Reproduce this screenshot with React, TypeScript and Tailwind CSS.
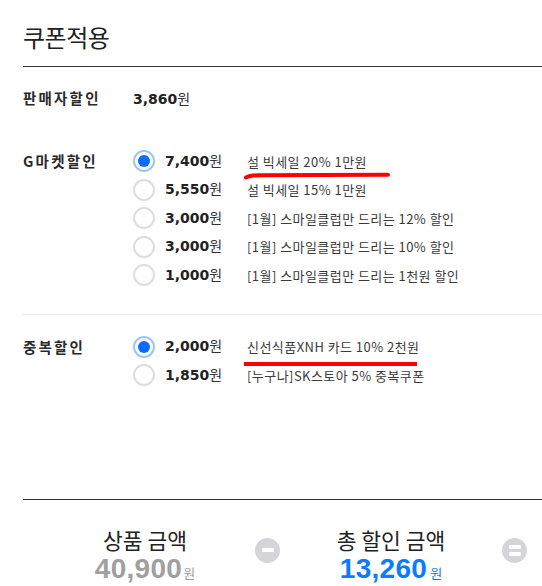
import React from "react";

function Radio({ sel }: { sel?: boolean }) {
  if (sel) {
    return (
      <div className="w-[22px] h-[22px] rounded-full border-2 border-[#9cc4ff] flex items-center justify-center shrink-0 bg-white">
        <div className="w-[12px] h-[12px] rounded-full bg-[#0b6cff]" />
      </div>
    );
  }
  return <div className="w-[22px] h-[22px] rounded-full border-2 border-[#dedede] bg-white shrink-0" />;
}

function OptRow({ sel, amt, desc }: { sel?: boolean; amt: string; desc: string }) {
  return (
    <div className="flex items-center h-[28.5px]">
      <Radio sel={sel} />
      <div className="w-[92px] pl-[10px] flex items-baseline shrink-0">
        <span className="font-['DejaVu_Sans',sans-serif] font-bold text-[14px] text-[#222]">{amt}</span>
        <span className="font-['Noto_Sans_CJK_KR',sans-serif] text-[14px] text-[#333] leading-none">원</span>
      </div>
      <span className="font-['Noto_Sans_CJK_KR',sans-serif] text-[13px] tracking-[0.45px] text-[#3a3a3a] whitespace-nowrap">{desc}</span>
    </div>
  );
}

function Label({ children }: { children: React.ReactNode }) {
  return (
    <div className="w-[110px] h-[28.5px] flex items-center shrink-0 font-['Noto_Sans_CJK_KR',sans-serif] font-semibold text-[14.5px] tracking-[2.2px] text-[#2a2a2a]">
      {children}
    </div>
  );
}

function CircleIcon({ kind }: { kind: "minus" | "equals" }) {
  return (
    <div className="w-[25px] h-[25px] rounded-full bg-[#d4d4d9] flex flex-col items-center justify-center gap-[3px] shrink-0 mt-[13px]">
      <div className="w-[12px] h-[4px] bg-white rounded-[1px]" />
      {kind === "equals" && <div className="w-[12px] h-[4px] bg-white rounded-[1px]" />}
    </div>
  );
}

export default function App() {
  return (
    <div className="relative w-[542px] h-[586px] bg-white overflow-hidden font-['Noto_Sans_CJK_KR',sans-serif]">
      {/* header */}
      <div className="h-[67px] ml-[23px] border-b border-[#333] pt-[21px]">
        <h1 className="text-[24px] leading-[32px] tracking-[-0.5px] text-[#222] font-normal">쿠폰적용</h1>
      </div>

      {/* seller discount */}
      <div className="flex pl-[23px] mt-[17px]">
        <Label>판매자할인</Label>
        <div className="flex items-baseline h-[28.5px] pt-[4px]">
          <span className="font-['DejaVu_Sans',sans-serif] font-bold text-[14px] text-[#222]">3,860</span>
          <span className="text-[14px] text-[#333]">원</span>
        </div>
      </div>

      {/* G market discount */}
      <div className="flex pl-[23px] mt-[34.5px]">
        <Label>G마켓할인</Label>
        <div className="flex flex-col">
          <OptRow sel amt="7,400" desc="설 빅세일 20% 1만원" />
          <OptRow amt="5,550" desc="설 빅세일 15% 1만원" />
          <OptRow amt="3,000" desc="[1월] 스마일클럽만 드리는 12% 할인" />
          <OptRow amt="3,000" desc="[1월] 스마일클럽만 드리는 10% 할인" />
          <OptRow amt="1,000" desc="[1월] 스마일클럽만 드리는 1천원 할인" />
        </div>
      </div>

      <div className="ml-[22px] mt-[24px] h-px bg-[#ebebeb]" />

      {/* duplicate discount */}
      <div className="flex pl-[23px] mt-[18px]">
        <Label>중복할인</Label>
        <div className="flex flex-col">
          <OptRow sel amt="2,000" desc="신선식품XNH 카드 10% 2천원" />
          <OptRow amt="1,850" desc="[누구나]SK스토아 5% 중복쿠폰" />
        </div>
      </div>

      <div className="ml-[23px] mt-[109px] h-px bg-[#333]" />

      {/* summary */}
      <div className="flex pl-[40px] pt-[25px]">
        <div className="w-[210px] flex flex-col items-center">
          <div className="text-[21.5px] leading-[29px] text-[#222]">상품 금액</div>
          <div className="flex items-baseline leading-[30px]">
            <span className="font-['Liberation_Sans',sans-serif] font-bold text-[28px] tracking-[0.3px] text-[#a0a0a0]">40,900</span>
            <span className="text-[13px] text-[#a0a0a0] ml-[1px]">원</span>
          </div>
        </div>
        <div className="w-[5px]" />
        <CircleIcon kind="minus" />
        <div className="w-[222px] flex flex-col items-center">
          <div className="text-[21.5px] leading-[29px] text-[#222]">총 할인 금액</div>
          <div className="flex items-baseline leading-[30px]">
            <span className="font-['Liberation_Sans',sans-serif] font-bold text-[28px] tracking-[0.3px] text-[#0b7bff]">13,260</span>
            <span className="text-[13px] text-[#0b7bff] ml-[3px]">원</span>
          </div>
        </div>
        <CircleIcon kind="equals" />
      </div>

      {/* red hand-drawn underlines (annotation overlay) */}
      <svg className="absolute inset-0 pointer-events-none" width="542" height="586" viewBox="0 0 542 586">
        <path d="M246 177.5 C249 176 252 175.5 258 175.2 L388 174.8" stroke="#ff0000" strokeWidth="4" fill="none" strokeLinecap="round" />
        <path d="M244 364 L417 364" stroke="#ff0000" strokeWidth="4" fill="none" strokeLinecap="butt" />
      </svg>
    </div>
  );
}
